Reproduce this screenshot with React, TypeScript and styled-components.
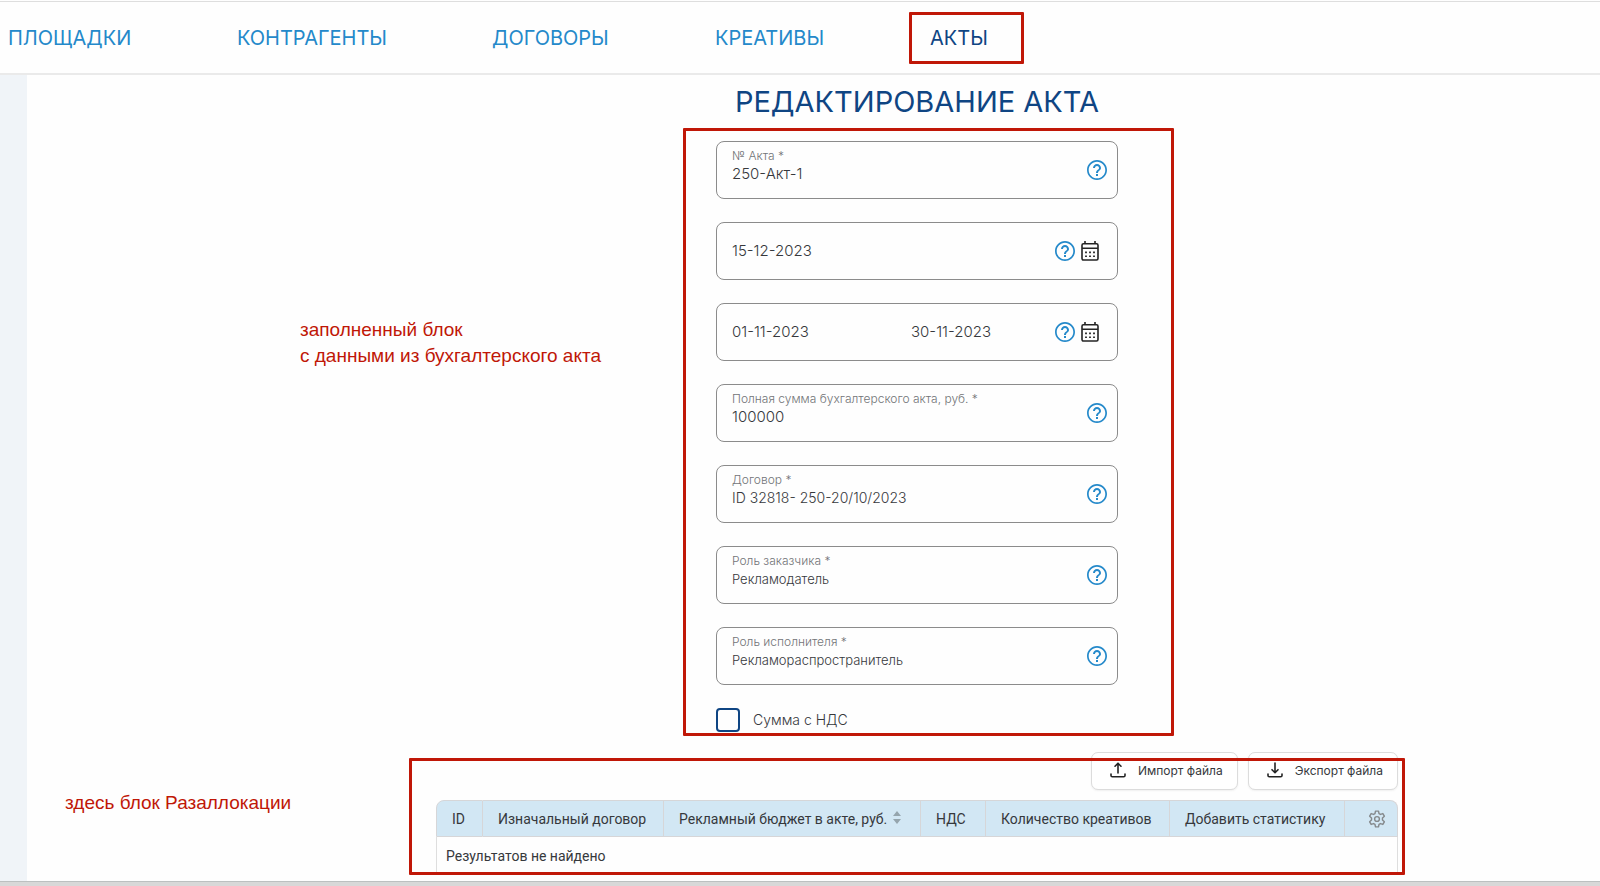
import React from "react";
import styled, { createGlobalStyle } from "styled-components";

const color = {
  link: "#2489ca",
  navy: "#0f4583",
  text: "#36383c",
  label: "#727477",
  line: "#dedede",
  mark: "#c01707",
};

const GlobalStyle = createGlobalStyle`
  *, *::before, *::after { box-sizing: border-box; }
  body {
    margin: 0;
    background: #fefefe;
    color: ${color.text};
    font-family: Inter, "Liberation Sans", sans-serif;
    font-weight: 300;
  }
  button, input, select { font: inherit; color: inherit; }
`;

/* Navigation */

const Header = styled.header`
  margin-top: 1px;
  border-top: 1px solid ${color.line};
  border-bottom: 2px solid #eaeaea;
`;

const Nav = styled.nav`
  display: grid;
  grid-template-columns: 229px 255px 223px 194px auto;
  align-items: center;
  justify-content: start;
  height: 71px;
  padding-left: 8px;
`;

const NavLink = styled.a<{ $current?: boolean }>`
  position: relative;
  justify-self: start;
  padding: ${(p) => (p.$current ? "14px 36px 14px 21px" : "0")};
  color: ${(p) => (p.$current ? color.navy : color.link)};
  font-size: 20px;
  font-weight: 400;
  line-height: 24px;
  text-decoration: none;
`;

/* Red marker frames and notes */

const Frame = styled.span<{ $inset: string }>`
  position: absolute;
  inset: ${(p) => p.$inset};
  border: 3px solid ${color.mark};
  border-radius: 1px;
  pointer-events: none;
`;

const Note = styled.p<{ $top: number; $left: number }>`
  grid-column: 1 / 3;
  margin: ${(p) => p.$top}px 0 0 ${(p) => p.$left}px;
  color: ${color.mark};
  font-family: "Liberation Sans", Arial, sans-serif;
  font-size: 19px;
  font-weight: 400;
  line-height: 26px;
`;

/* Page body */

const Body = styled.div`
  display: flex;
`;

const Rail = styled.aside`
  flex: 0 0 27px;
  background: #f0f4f8;
`;

const Main = styled.main`
  flex: 1;
  min-width: 0;
  padding: 9px 0 6px;
`;

const Row = styled.div<{ $width: number }>`
  display: grid;
  grid-template-columns: 207px minmax(0, 1fr) ${(p) => p.$width}px minmax(0, 1fr);
  align-items: start;
`;

const Title = styled.h1`
  grid-column: 3;
  justify-self: center;
  margin: 0 0 21px;
  color: ${color.navy};
  font-size: 29px;
  font-weight: 400;
  line-height: 36px;
  white-space: nowrap;
`;

/* Form */

const Form = styled.form`
  position: relative;
  grid-column: 3;
  display: flex;
  flex-direction: column;
  gap: 23px;
`;

const FieldBox = styled.div<{ $dated?: boolean }>`
  display: flex;
  align-items: center;
  gap: 6px;
  height: 58px;
  padding: 0 ${(p) => (p.$dated ? 18 : 10)}px 0 15px;
  border: 1px solid #8b8b8b;
  border-radius: 8px;
`;

const FieldText = styled.div`
  flex: 1;
  min-width: 0;
  display: flex;
  flex-direction: column;
  align-self: start;
  padding-top: 6px;
`;

const DateRange = styled.div`
  flex: 1;
  min-width: 0;
  display: grid;
  grid-template-columns: 179px minmax(0, 1fr);
`;

const Label = styled.label`
  color: ${color.label};
  font-size: 12px;
  line-height: 16px;
`;

const Input = styled.input`
  width: 100%;
  min-width: 0;
  height: 20px;
  padding: 0;
  border: 0;
  outline: 0;
  background: none;
  font-size: 15px;
  line-height: 20px;
`;

const Select = styled.select<{ $size: number }>`
  width: 100%;
  height: 20px;
  padding: 0;
  border: 0;
  outline: 0;
  appearance: none;
  background: none;
  font-size: ${(p) => p.$size}px;
  line-height: 20px;
`;

const IconButton = styled.button`
  display: flex;
  padding: 0;
  border: 0;
  background: none;
`;

const CheckLabel = styled.label`
  display: flex;
  align-items: center;
  gap: 13px;
  font-size: 14px;
  line-height: 24px;
`;

const Checkbox = styled.input`
  appearance: none;
  width: 24px;
  height: 24px;
  margin: 0;
  border: 2px solid ${color.navy};
  border-radius: 4px;
  &:checked { background: ${color.navy}; }
`;

/* Allocation table */

const Allocation = styled.section`
  position: relative;
  grid-column: 3;
  margin-top: 20px;
`;

const Toolbar = styled.div`
  display: flex;
  justify-content: flex-end;
  gap: 10px;
  margin-bottom: 10px;
`;

const FileButton = styled.button`
  display: flex;
  align-items: center;
  gap: 12px;
  height: 38px;
  padding: 0 14px 2px 18px;
  border: 1px solid #dcdcdc;
  border-radius: 7px;
  background: #fff;
  box-shadow: 0 1px 2px rgba(0, 0, 0, 0.06);
  font-size: 12px;
  font-weight: 400;
  white-space: nowrap;
`;

const Table = styled.table`
  width: 100%;
  table-layout: fixed;
  border-collapse: separate;
  border-spacing: 0;
  font-family: Roboto, "Liberation Sans", sans-serif;
  font-size: 14px;
  font-weight: 400;
  line-height: 20px;
`;

const Col = styled.col<{ $width: number }>`
  width: ${(p) => p.$width}px;
`;

const HeadCell = styled.th`
  height: 37px;
  padding: 0 0 0 15px;
  border: 1px solid #d6d6d8;
  border-left-width: 0;
  background: #d2e7f4;
  font-weight: 400;
  text-align: left;
  white-space: nowrap;
  &:first-child { border-left-width: 1px; border-top-left-radius: 8px; }
  &:last-child { border-top-right-radius: 8px; }
`;

const HeadContent = styled.span<{ $end?: boolean }>`
  display: flex;
  align-items: center;
  justify-content: ${(p) => (p.$end ? "flex-end" : "flex-start")};
  gap: 6px;
  padding-right: ${(p) => (p.$end ? 11 : 0)}px;
`;

const EmptyCell = styled.td`
  height: 38px;
  padding: 0 9px;
  border: solid ${color.line};
  border-width: 0 1px;
`;

const BottomBar = styled.footer`
  height: 5px;
  border-top: 1px solid #bcc0c0;
  background: #d8d8d8;
`;

/* Icons */

const HelpIcon = () => (
  <svg width="20" height="20" viewBox="2 2 20 20" fill={color.link} aria-hidden="true">
    <path d="M11 18h2v-2h-2v2zm1-16C6.48 2 2 6.48 2 12s4.48 10 10 10 10-4.48 10-10S17.52 2 12 2zm0 18.3c-4.6 0-8.3-3.7-8.3-8.3S7.4 3.7 12 3.7s8.3 3.7 8.3 8.3-3.7 8.3-8.3 8.3zm0-14.3c-2.21 0-4 1.79-4 4h2c0-1.1.9-2 2-2s2 .9 2 2c0 2-3 1.75-3 5h2c0-2.25 3-2.5 3-5 0-2.21-1.79-4-4-4z" />
  </svg>
);

const CalendarIcon = () => (
  <svg width="18" height="20" viewBox="0 0 18 20" fill="none" stroke="#242424" strokeWidth="1.6" aria-hidden="true">
    <rect x="1" y="2.8" width="16" height="16.2" rx="1.4" />
    <path d="M1 7.2h16M4 0v3M14 0v3" />
    <path d="M4.1 11.4h1.8M8.1 11.4h1.8M12.1 11.4h1.8M4.1 15.2h1.8M8.1 15.2h1.8M12.1 15.2h1.8" />
  </svg>
);

const UploadIcon = () => (
  <svg width="16" height="16" viewBox="0 0 16 16" fill="none" stroke="#232323" strokeWidth="1.6" strokeLinecap="round" strokeLinejoin="round" aria-hidden="true">
    <path d="M8 11V1.5M5 4.2L8 1.2l3 3M1 12v1.5c0 .8.5 1.3 1.3 1.3h11.4c.8 0 1.3-.5 1.3-1.3V12" />
  </svg>
);

const DownloadIcon = () => (
  <svg width="16" height="16" viewBox="0 0 16 16" fill="none" stroke="#232323" strokeWidth="1.6" strokeLinecap="round" strokeLinejoin="round" aria-hidden="true">
    <path d="M8 1v9.5M5 7.7L8 10.7l3-3M1 12v1.5c0 .8.5 1.3 1.3 1.3h11.4c.8 0 1.3-.5 1.3-1.3V12" />
  </svg>
);

const SortIcon = () => (
  <svg width="8" height="16" viewBox="0 0 8 16" fill="#95a5ad" aria-hidden="true">
    <path d="M4 0l4 5H0zM4 13L0 8h8z" />
  </svg>
);

const GearIcon = () => (
  <svg width="18" height="18" viewBox="0 0 24 24" fill="none" stroke="#85898c" strokeWidth="1.9" strokeLinejoin="round" aria-hidden="true">
    <path d="M10 1.5h4l.7 3.3 1.9 1.1 3.2-1.1 2 3.5-2.5 2.3v2.8l2.5 2.3-2 3.5-3.2-1.1-1.9 1.1-.7 3.3h-4l-.7-3.3-1.9-1.1-3.2 1.1-2-3.5 2.5-2.3v-2.8L2.2 8.3l2-3.5 3.2 1.1 1.900-1.100z" />
    <circle cx="12" cy="12" r="3.2" />
  </svg>
);

const Help = () => (
  <IconButton type="button" aria-label="Подсказка">
    <HelpIcon />
  </IconButton>
);

const Calendar = () => (
  <IconButton type="button" aria-label="Выбрать дату">
    <CalendarIcon />
  </IconButton>
);

type FieldProps = { id: string; label: string; value: string };

const TextField = ({ id, label, value }: FieldProps) => (
  <FieldBox>
    <FieldText>
      <Label htmlFor={id}>{label}</Label>
      <Input id={id} defaultValue={value} />
    </FieldText>
    <Help />
  </FieldBox>
);

const SelectField = ({ id, label, value, size }: FieldProps & { size: number }) => (
  <FieldBox>
    <FieldText>
      <Label htmlFor={id}>{label}</Label>
      <Select id={id} defaultValue={value} $size={size}>
        <option>{value}</option>
      </Select>
    </FieldText>
    <Help />
  </FieldBox>
);

const DateField = ({ dates }: { dates: { label: string; value: string }[] }) => (
  <FieldBox $dated>
    <DateRange>
      {dates.map((d) => (
        <Input key={d.label} aria-label={d.label} defaultValue={d.value} />
      ))}
    </DateRange>
    <Help />
    <Calendar />
  </FieldBox>
);

const links = ["ПЛОЩАДКИ", "КОНТРАГЕНТЫ", "ДОГОВОРЫ", "КРЕАТИВЫ"];
const columnWidths = [47, 181, 257, 65, 184, 175, 53];

export default function App() {
  return (
    <>
      <GlobalStyle />
      <Header>
        <Nav>
          {links.map((name) => (
            <NavLink key={name} href="#">{name}</NavLink>
          ))}
          <NavLink href="#" $current aria-current="page">
            АКТЫ
            <Frame $inset="0" />
          </NavLink>
        </Nav>
      </Header>
      <Body>
        <Rail />
        <Main>
          <Row $width={402}>
            <Title>РЕДАКТИРОВАНИЕ АКТА</Title>
          </Row>
          <Row $width={402}>
            <Note $top={176} $left={273}>
              заполненный блок
              <br />
              с данными из бухгалтерского акта
            </Note>
            <Form>
              <TextField id="number" label="№ Акта *" value="250-Акт-1" />
              <DateField dates={[{ label: "Дата акта", value: "15-12-2023" }]} />
              <DateField
                dates={[
                  { label: "Начало периода", value: "01-11-2023" },
                  { label: "Конец периода", value: "30-11-2023" },
                ]}
              />
              <TextField id="amount" label="Полная сумма бухгалтерского акта, руб. *" value="100000" />
              <SelectField id="contract" label="Договор *" value="ID 32818- 250-20/10/2023" size={14} />
              <SelectField id="customer" label="Роль заказчика *" value="Рекламодатель" size={13} />
              <SelectField id="contractor" label="Роль исполнителя *" value="Рекламораспространитель" size={13} />
              <CheckLabel>
                <Checkbox type="checkbox" />
                Сумма с НДС
              </CheckLabel>
              <Frame $inset="-13px -56px -4px -33px" />
            </Form>
          </Row>
          <Row $width={962}>
            <Note $top={58} $left={38}>здесь блок Разаллокации</Note>
            <Allocation>
              <Toolbar>
                <FileButton type="button"><UploadIcon />Импорт файла</FileButton>
                <FileButton type="button"><DownloadIcon />Экспорт файла</FileButton>
              </Toolbar>
              <Table>
                <colgroup>
                  {columnWidths.map((w, i) => <Col key={i} $width={w} />)}
                </colgroup>
                <thead>
                  <tr>
                    <HeadCell>ID</HeadCell>
                    <HeadCell>Изначальный договор</HeadCell>
                    <HeadCell>
                      <HeadContent>Рекламный бюджет в акте, руб.<SortIcon /></HeadContent>
                    </HeadCell>
                    <HeadCell>НДС</HeadCell>
                    <HeadCell>Количество креативов</HeadCell>
                    <HeadCell>Добавить статистику</HeadCell>
                    <HeadCell>
                      <HeadContent $end>
                        <IconButton type="button" aria-label="Настройки таблицы"><GearIcon /></IconButton>
                      </HeadContent>
                    </HeadCell>
                  </tr>
                </thead>
                <tbody>
                  <tr>
                    <EmptyCell colSpan={7}>Результатов не найдено</EmptyCell>
                  </tr>
                </tbody>
              </Table>
              <Frame $inset="6px -7px 0 -27px" />
            </Allocation>
          </Row>
        </Main>
      </Body>
      <BottomBar />
    </>
  );
}
